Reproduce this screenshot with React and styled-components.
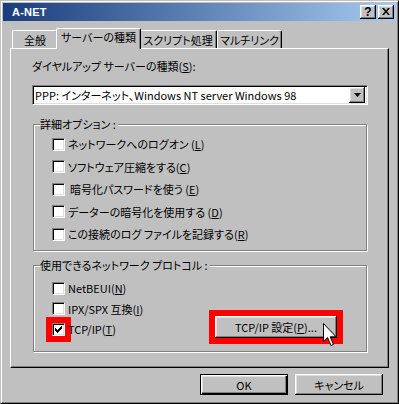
import React from 'react';
import styled, { createGlobalStyle, css } from 'styled-components';

const FACE = '#c0c0c0';

const Global = createGlobalStyle`
  html, body { margin: 0; padding: 0; background: ${FACE}; }
  body {
    font-family: "Noto Sans CJK JP", "Noto Sans", sans-serif;
    font-size: 11px;
    font-feature-settings: "palt" 1;
    color: #000;
  }
  * { box-sizing: border-box; }
`;

const raised = css`
  box-shadow: inset -1px -1px #000, inset 1px 1px #fff, inset -2px -2px #808080, inset 2px 2px #dfdfdf;
`;

const Window = styled.div`
  width: 399px;
  height: 404px;
  background: ${FACE};
  border: 1px solid;
  border-color: ${FACE} #000 #000 ${FACE};
  box-shadow: inset 1px 1px #fff, inset -1px -1px #808080;
  padding: 2px;
  display: flex;
  flex-direction: column;
`;

const TitleBar = styled.div`
  height: 18px;
  display: flex;
  align-items: center;
  padding: 0 2px 0 9px;
  background: linear-gradient(to right, #1a3c7c, #a6caf0);
`;

const TitleText = styled.span`
  font-family: "Liberation Sans", Arial, sans-serif;
  font-weight: bold;
  font-size: 11px;
  color: #fff;
  letter-spacing: 0.2px;
`;

const TitleButtons = styled.div`
  margin-left: auto;
  display: flex;
  gap: 2px;
`;

const TitleBtn = styled.div`
  width: 16px;
  height: 14px;
  background: ${FACE};
  ${raised};
  display: flex;
  align-items: center;
  justify-content: center;
  font-family: "Liberation Sans", Arial, sans-serif;
  font-weight: bold;
  font-size: 12px;
  line-height: 12px;
  padding-bottom: 1px;
`;

const Body = styled.div`
  flex: 1;
  padding: 7px 7px 0 7px;
  display: flex;
  flex-direction: column;
`;

const TabRow = styled.div`
  height: 20px;
  display: flex;
  align-items: flex-end;
  padding-left: 2px;
`;

const Tab = styled.div`
  position: relative;
  width: ${p => p.$w}px;
  height: ${p => (p.$active ? 21 : 18)}px;
  margin: 0 ${p => (p.$active ? -2 : 0)}px ${p => (p.$active ? -1 : 0)}px;
  z-index: ${p => (p.$active ? 1 : 0)};
  background: ${FACE};
  border-left: 1px solid #fff;
  border-top: 1px solid #fff;
  border-right: 1px solid #000;
  border-radius: 2px 2px 0 0;
  box-shadow: inset -1px 0 #808080;
  padding-top: ${p => (p.$active ? 1 : 2)}px;
  text-align: center;
  font-size: 11px;
  line-height: 14px;
  white-space: nowrap;
`;

const Panel = styled.div`
  height: 320px;
  border: 1px solid;
  border-color: #fff #000 #000 #fff;
  box-shadow: inset -1px -1px #808080;
  padding: 10px 20px 0 21px;
  display: flex;
  flex-direction: column;
`;

const FieldLabel = styled.div`
  line-height: 14px;
  height: 14px;
  white-space: nowrap;
`;

const Combo = styled.div`
  margin-top: 12px;
  height: 20px;
  background: #fff;
  border: 1px solid;
  border-color: #808080 #fff #fff #808080;
  box-shadow: inset 1px 1px #000, inset -1px -1px #dfdfdf;
  display: flex;
  align-items: center;
  padding: 2px;
`;

const ComboText = styled.span`
  flex: 1;
  line-height: 14px;
  white-space: nowrap;
`;

const ComboArrow = styled.div`
  width: 16px;
  height: 16px;
  background: ${FACE};
  ${raised};
  display: flex;
  align-items: center;
  justify-content: center;
`;

const Group = styled.div`
  position: relative;
  margin-top: ${p => p.$top}px;
  margin-left: 1px;
  width: 334px;
  height: ${p => p.$h}px;
  border: 1px solid #808080;
  box-shadow: inset 1px 1px #fff, 1px 1px #fff;
  padding: ${p => p.$pt}px 0 0 18px;
  display: flex;
  flex-direction: column;
  gap: ${p => p.$gap}px;
`;

const Legend = styled.div`
  position: absolute;
  top: -8px;
  left: 6px;
  padding: 0 2px 0 0;
  background: ${FACE};
  line-height: 14px;
  white-space: nowrap;
`;

const CheckRow = styled.div`
  height: 14px;
  display: flex;
  align-items: center;
  gap: 3px;
  white-space: nowrap;
  line-height: 14px;
`;

const Box = styled.span`
  flex: none;
  width: 13px;
  height: 13px;
  background: #fff;
  border: 1px solid;
  border-color: #808080 #fff #fff #808080;
  box-shadow: inset 1px 1px #000, inset -1px -1px #dfdfdf;
  display: flex;
  align-items: center;
  justify-content: center;
  outline: ${p => (p.$mark ? '6px solid #f00' : 'none')};
`;

const Label = styled.span`
  padding-left: ${p => p.$pl || 0}px;
`;

const PushButton = styled.button`
  position: relative;
  font: inherit;
  color: #000;
  width: ${p => p.$w}px;
  height: ${p => p.$h}px;
  background: ${FACE};
  border: none;
  padding: 0;
  line-height: 14px;
  white-space: nowrap;
  ${p =>
    p.$default
      ? css`
          box-shadow: inset 1px 1px #000, inset -1px -1px #000, inset 2px 2px #fff,
            inset -2px -2px #000, inset -3px -3px #808080, inset 3px 3px #dfdfdf;
        `
      : raised};
  ${p =>
    p.$mark &&
    css`
      outline: 6px solid #f00;
      margin: -5px 29px 0 auto;
    `}
`;

const Cursor = styled.svg`
  position: absolute;
  left: 108px;
  top: 7px;
  z-index: 2;
`;

const ButtonRow = styled.div`
  margin-top: 6px;
  display: flex;
  justify-content: flex-end;
  gap: 7px;
  padding-right: 6px;
`;

const Check = () => (
  <svg width="7" height="7" viewBox="0 0 7 7">
    <path d="M0 2h1v1h1v1h1v-1h1v-1h1v-1h1v-1h1v3h-1v1h-1v1h-1v1h-1v1h-1v-1h-1v-1h-1z" fill="#000" />
  </svg>
);

const tabs = [
  { label: '全般', w: 46 },
  { label: 'サーバーの種類', w: 85, active: true },
  { label: 'スクリプト処理', w: 78 },
  { label: 'マルチリンク', w: 65 },
];

const options = [
  <>ネットワークへのログオン (<u>L</u>)</>,
  <>ソフトウェア圧縮をする(<u>C</u>)</>,
  <>暗号化パスワードを使う (<u>E</u>)</>,
  <>データーの暗号化を使用する (<u>D</u>)</>,
  <>この接続のログ ファイルを記録する(<u>R</u>)</>,
];

export default function App() {
  return (
    <>
      <Global />
      <Window>
        <TitleBar>
          <TitleText>A-NET</TitleText>
          <TitleButtons>
            <TitleBtn>?</TitleBtn>
            <TitleBtn>
              <svg width="8" height="7" viewBox="0 0 8 7">
                <path d="M0 0h2l2 2.5 2-2.5h2L5 3.5 8 7H6L4 4.5 2 7H0l3-3.5z" fill="#000" />
              </svg>
            </TitleBtn>
          </TitleButtons>
        </TitleBar>
        <Body>
          <TabRow>
            {tabs.map(t => (
              <Tab key={t.label} $w={t.w} $active={t.active}>
                {t.label}
              </Tab>
            ))}
          </TabRow>
          <Panel>
            <FieldLabel>
              ダイヤルアップ サーバーの種類(<u>S</u>):
            </FieldLabel>
            <Combo>
              <ComboText>PPP: インターネット、Windows NT server Windows 98</ComboText>
              <ComboArrow>
                <svg width="7" height="4" viewBox="0 0 7 4">
                  <path d="M0 0h7L3.5 4z" fill="#000" />
                </svg>
              </ComboArrow>
            </Combo>
            <Group $top={19} $h={127} $pt={12} $gap={8.5}>
              <Legend>詳細オプション :</Legend>
              {options.map((o, i) => (
                <CheckRow key={i}>
                  <Box />
                  <Label $pl={i === 2 ? 2 : 0}>{o}</Label>
                </CheckRow>
              ))}
            </Group>
            <Group $top={14} $h={87} $pt={15} $gap={6.5}>
              <Legend>使用できるネットワーク プロトコル :</Legend>
              <CheckRow>
                <Box />
                <Label>NetBEUI(<u>N</u>)</Label>
              </CheckRow>
              <CheckRow>
                <Box />
                <Label>IPX/SPX 互換(<u>I</u>)</Label>
              </CheckRow>
              <CheckRow>
                <Box $mark>
                  <Check />
                </Box>
                <Label>TCP/IP(<u>T</u>)</Label>
                <PushButton $w={122} $h={22} $mark>
                  TCP/IP 設定(<u>P</u>)...
                  <Cursor width="14" height="25" viewBox="0 0 14 25">
                    <path
                      d="M0.5 0.5V18.5L4.5 14.5L8 22.5L10.5 21.5L7.2 13.8H13Z"
                      fill="#fff"
                      stroke="#000"
                      strokeWidth="1"
                    />
                  </Cursor>
                </PushButton>
              </CheckRow>
            </Group>
          </Panel>
          <ButtonRow>
            <PushButton $w={88} $h={21} $default>
              OK
            </PushButton>
            <PushButton $w={88} $h={21}>
              キャンセル
            </PushButton>
          </ButtonRow>
        </Body>
      </Window>
    </>
  );
}
